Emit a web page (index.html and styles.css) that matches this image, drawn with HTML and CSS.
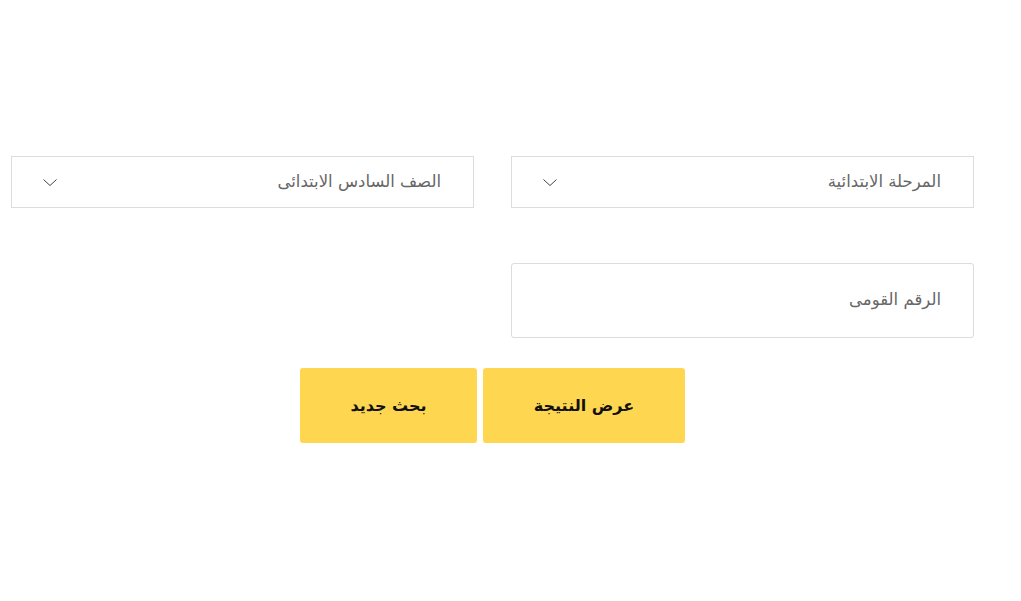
FILE: index.html
```html
<!DOCTYPE html>
<html lang="ar" dir="rtl">
<head>
<meta charset="utf-8">
<title>نتيجة</title>
<link rel="stylesheet" href="styles.css">
</head>
<body>
<main class="page">
  <form class="form">
    <div class="row">
      <div class="field select">
        <span class="label">المرحلة الابتدائية</span>
        <svg class="chev" width="16" height="9" viewBox="0 0 16 9"><path d="M1.5 1.5l6.5 6 6.5-6" fill="none" stroke="#444" stroke-width="1"/></svg>
      </div>
      <div class="field select">
        <span class="label">الصف السادس الابتدائى</span>
        <svg class="chev" width="16" height="9" viewBox="0 0 16 9"><path d="M1.5 1.5l6.5 6 6.5-6" fill="none" stroke="#444" stroke-width="1"/></svg>
      </div>
    </div>
    <div class="row">
      <div class="field input">
        <span class="label">الرقم القومى</span>
      </div>
    </div>
    <div class="actions">
      <button type="button" class="btn btn-wide">عرض النتيجة</button>
      <button type="button" class="btn">بحث جديد</button>
    </div>
  </form>
</main>
</body>
</html>
```
FILE: styles.css
```css
html, body {
  margin: 0;
  padding: 0;
  background: #fff;
}
body {
  font-family: "DejaVu Sans", "Noto Sans", sans-serif;
}
.page {
  padding: 156px 47px 0 11px;
}
.form {
  width: 963px;
  display: flex;
  flex-direction: column;
}
.row {
  display: grid;
  grid-template-columns: 463px 463px;
  column-gap: 37px;
}
.field {
  box-sizing: border-box;
  border: 1px solid #dcdcdc;
  display: flex;
  align-items: center;
  justify-content: space-between;
  padding: 0 32px 0 30px;
  color: #666;
  font-size: 16.5px;
}
.select {
  height: 52px;
}
.input {
  height: 75px;
  margin-top: 55px;
  border-radius: 3px;
}
.label {
  line-height: 1;
}
.chev {
  display: block;
}
.actions {
  display: flex;
  justify-content: center;
  gap: 6px;
  margin-top: 30px;
}
.btn {
  height: 75px;
  width: 177px;
  border: none;
  border-radius: 3px;
  background: #ffd64f;
  color: #111;
  font-family: "DejaVu Sans", sans-serif;
  font-weight: bold;
  font-size: 16px;
  cursor: pointer;
}
.btn-wide {
  width: 202px;
}
```
